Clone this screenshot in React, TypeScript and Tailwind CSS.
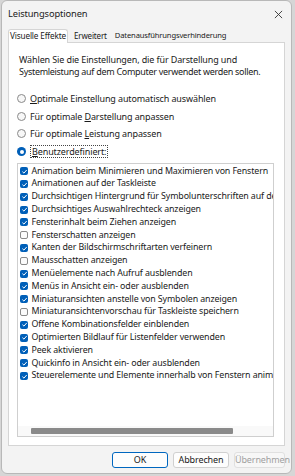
import React from 'react';

const font = { fontFamily: '"Noto Sans", "Open Sans", sans-serif' };

const items: { label: string; checked: boolean }[] = [
  { label: 'Animation beim Minimieren und Maximieren von Fenstern', checked: true },
  { label: 'Animationen auf der Taskleiste', checked: true },
  { label: 'Durchsichtigen Hintergrund für Symbolunterschriften auf dem Desktop', checked: true },
  { label: 'Durchsichtiges Auswahlrechteck anzeigen', checked: true },
  { label: 'Fensterinhalt beim Ziehen anzeigen', checked: true },
  { label: 'Fensterschatten anzeigen', checked: false },
  { label: 'Kanten der Bildschirmschriftarten verfeinern', checked: true },
  { label: 'Mausschatten anzeigen', checked: false },
  { label: 'Menüelemente nach Aufruf ausblenden', checked: true },
  { label: 'Menüs in Ansicht ein- oder ausblenden', checked: true },
  { label: 'Miniaturansichten anstelle von Symbolen anzeigen', checked: true },
  { label: 'Miniaturansichtenvorschau für Taskleiste speichern', checked: false },
  { label: 'Offene Kombinationsfelder einblenden', checked: true },
  { label: 'Optimierten Bildlauf für Listenfelder verwenden', checked: true },
  { label: 'Peek aktivieren', checked: true },
  { label: 'Quickinfo in Ansicht ein- oder ausblenden', checked: true },
  { label: 'Steuerelemente und Elemente innerhalb von Fenstern animieren', checked: true },
];

const Check = ({ checked }: { checked: boolean }) =>
  checked ? (
    <span className="flex h-[8px] w-[8px] shrink-0 items-center justify-center rounded-[2px] bg-[#005fb8]">
      <svg viewBox="0 0 10 10" className="h-[7px] w-[7px]">
        <path d="M2 5.2 L4.2 7.3 L8.2 2.8" fill="none" stroke="#fff" strokeWidth="1.4" />
      </svg>
    </span>
  ) : (
    <span className="h-[8px] w-[8px] shrink-0 rounded-[2px] border border-[#8a8a8a] bg-[#fbfbfb]" />
  );

const Radio = ({ selected }: { selected?: boolean }) =>
  selected ? (
    <span className="flex h-[9px] w-[9px] shrink-0 items-center justify-center rounded-full bg-[#005fb8]">
      <span className="h-[4px] w-[4px] rounded-full bg-white" />
    </span>
  ) : (
    <span className="h-[9px] w-[9px] shrink-0 rounded-full border border-[#8a8a8a] bg-[#f7f7f7]" />
  );

export default function App() {
  return (
    <div className="h-[476px] w-[295px] bg-[#d6d6d6] pb-[2px] pl-[1px] pr-[3px]" style={font}>
      <div className="flex h-full flex-col rounded-[6px] border border-[#b8b8b8] bg-[#f3f3f3] text-[9px] tracking-[-0.12px] text-[#1a1a1a]">
        {/* Titelleiste */}
        <div className="flex h-[26px] shrink-0 items-center justify-between pl-[6px] pr-[8px] text-[9.3px]">
          <span>Leistungsoptionen</span>
          <svg viewBox="0 0 10 10" className="h-[9px] w-[9px]">
            <path d="M1 1 L9 9 M9 1 L1 9" stroke="#333" strokeWidth="1" />
          </svg>
        </div>

        {/* Tabs */}
        <div className="flex h-[15px] shrink-0 items-end pl-[6px] text-[7.6px] tracking-[-0.15px]">
          <div className="relative -mb-px flex h-[14px] w-[60px] items-center justify-center rounded-t-[3px] border border-b-0 border-[#d5d5d5] bg-white text-[8.2px]">
            Visuelle Effekte
          </div>
          <div className="flex h-[13px] items-center pl-[6px] pr-[8px] text-[8px]">Erweitert</div>
          <div className="flex h-[13px] items-center">Datenausführungsverhinderung</div>
        </div>

        {/* Panel */}
        <div className="mx-[6px] flex h-[404px] shrink-0 flex-col border border-[#d5d5d5] bg-white pl-[8px] pr-[10px]">
          <p className="mt-[11px] whitespace-nowrap pl-[2px] leading-[12px]">
            Wählen Sie die Einstellungen, die für Darstellung und
            <br />
            <span className="tracking-[-0.3px]">Systemleistung auf dem Computer verwendet werden sollen.</span>
          </p>

          <div className="mt-[12px] flex flex-col">
            <div className="flex h-[17.6px] items-center gap-[4px]">
              <Radio />
              <span>
                <span className="underline">O</span>ptimale Einstellung automatisch auswählen
              </span>
            </div>
            <div className="flex h-[17.6px] items-center gap-[4px]">
              <Radio />
              <span>
                Für optimale <span className="underline">D</span>arstellung anpassen
              </span>
            </div>
            <div className="flex h-[17.6px] items-center gap-[4px]">
              <Radio />
              <span>
                Für optimale <span className="underline">L</span>eistung anpassen
              </span>
            </div>
            <div className="flex h-[17.6px] items-center gap-[4px]">
              <Radio selected />
              <span className="border border-dotted border-[#444] px-px leading-[11px]">
                <span className="underline">B</span>enutzerdefiniert:
              </span>
            </div>
          </div>

          {/* Liste */}
          <div className="mt-[2.5px] flex h-[274px] flex-col overflow-hidden border border-[#cfcfcf] bg-white text-[8.85px]">
            <div className="flex flex-1 flex-col pt-[1px]">
              {items.map((it) => (
                <div key={it.label} className="flex h-[12.8px] items-center gap-[3.5px] whitespace-nowrap pl-[2px]">
                  <Check checked={it.checked} />
                  <span>{it.label}</span>
                </div>
              ))}
            </div>
            <div className="flex h-[10px] shrink-0 items-center bg-[#f9f9f9] px-[3px]">
              <div className="ml-[10px] h-[6px] w-[202px] rounded-[1px] bg-[#8a8a8a]" />
            </div>
          </div>
        </div>

        {/* Buttons */}
        <div className="flex flex-1 items-center justify-end gap-[5px] pr-[6px] pt-[1px] text-[9px]">
          <button className="h-[16px] w-[56px] rounded-[3px] border border-[#0067c0] bg-[#fdfdfd]">OK</button>
          <button className="h-[16px] w-[56px] rounded-[3px] border border-[#d0d0d0] bg-[#fdfdfd]">Abbrechen</button>
          <button className="h-[16px] w-[51px] rounded-[3px] border border-[#e0e0e0] bg-[#f7f7f7] text-[#a0a0a0]">
            Übernehmen
          </button>
        </div>
      </div>
    </div>
  );
}
